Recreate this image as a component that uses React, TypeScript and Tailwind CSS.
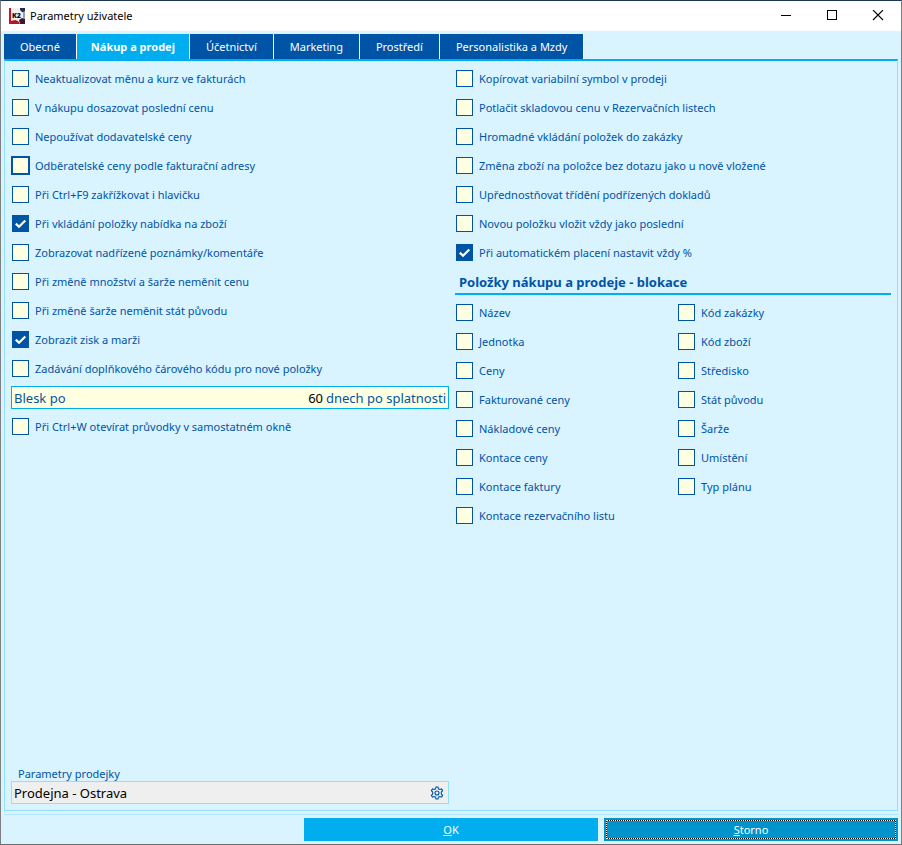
import React from "react";
import { clsx } from "clsx";

interface CheckProps {
  id: string;
  label: string;
  checked?: boolean;
  focused?: boolean;
}

const tabs = ["Obecné", "Nákup a prodej", "Účetnictví", "Marketing", "Prostředí", "Personalistika a Mzdy"];

const purchase: CheckProps[] = [
  { id: "currency", label: "Neaktualizovat měnu a kurz ve fakturách" },
  { id: "last-price", label: "V nákupu dosazovat poslední cenu" },
  { id: "supplier-prices", label: "Nepoužívat dodavatelské ceny" },
  { id: "customer-prices", label: "Odběratelské ceny podle fakturační adresy", focused: true },
  { id: "ctrl-f9", label: "Při Ctrl+F9 zakřížkovat i hlavičku" },
  { id: "offer", label: "Při vkládání položky nabídka na zboží", checked: true },
  { id: "comments", label: "Zobrazovat nadřízené poznámky/komentáře" },
  { id: "batch-price", label: "Při změně množství a šarže neměnit cenu" },
  { id: "batch-origin", label: "Při změně šarže neměnit stát původu" },
  { id: "profit", label: "Zobrazit zisk a marži", checked: true },
  { id: "barcode", label: "Zadávání doplňkového čárového kódu pro nové položky" },
];

const sales: CheckProps[] = [
  { id: "symbol", label: "Kopírovat variabilní symbol v prodeji" },
  { id: "stock-price", label: "Potlačit skladovou cenu v Rezervačních listech" },
  { id: "bulk", label: "Hromadné vkládání položek do zakázky" },
  { id: "goods-change", label: "Změna zboží na položce bez dotazu jako u nově vložené" },
  { id: "sorting", label: "Upřednostňovat třídění podřízených dokladů" },
  { id: "new-last", label: "Novou položku vložit vždy jako poslední" },
  { id: "auto-pay", label: "Při automatickém placení nastavit vždy %", checked: true },
];

const blockLeft: CheckProps[] = [
  { id: "b-name", label: "Název" },
  { id: "b-unit", label: "Jednotka" },
  { id: "b-prices", label: "Ceny" },
  { id: "b-invoiced", label: "Fakturované ceny" },
  { id: "b-cost", label: "Nákladové ceny" },
  { id: "b-acc-price", label: "Kontace ceny" },
  { id: "b-acc-invoice", label: "Kontace faktury" },
  { id: "b-acc-reservation", label: "Kontace rezervačního listu" },
];

const blockRight: CheckProps[] = [
  { id: "b-order", label: "Kód zakázky" },
  { id: "b-goods", label: "Kód zboží" },
  { id: "b-center", label: "Středisko" },
  { id: "b-origin", label: "Stát původu" },
  { id: "b-batch", label: "Šarže" },
  { id: "b-location", label: "Umístění" },
  { id: "b-plan", label: "Typ plánu" },
];

function Check({ id, label, checked, focused }: CheckProps) {
  return (
    <div className="flex h-[29px] items-center">
      <span className="grid w-[19px] place-items-center">
        <input
          id={id}
          type="checkbox"
          defaultChecked={checked}
          className={clsx(
            "peer col-start-1 row-start-1 appearance-none border-[#0054a6] bg-[#ffffe1] checked:bg-[#0054a6]",
            focused ? "size-[19px] border-2" : "size-[17px] border"
          )}
        />
        <svg
          viewBox="0 0 17 17"
          className="pointer-events-none invisible col-start-1 row-start-1 size-[17px] peer-checked:visible"
        >
          <path d="M3.8 8.600 7 11.800 13.300 5.400" fill="none" stroke="#ffffe1" strokeWidth="2.200" />
        </svg>
      </span>
      <label htmlFor={id} className="pl-[5px] whitespace-nowrap">
        {label}
      </label>
    </div>
  );
}

function Logo() {
  return (
    <svg viewBox="0 0 16 16" className="size-4" aria-hidden="true">
      <rect width="16" height="16" fill="#f1eff2" />
      <path d="M11 0h5v5l-3-1-2-2z" fill="#2a2b45" />
      <path d="M14 4l2-1v8l-2-1z" fill="#9aa0b4" />
      <path d="M2 16v-3l4-1 3 1 2 3z" fill="#b3142c" />
      <path d="M10 12l3-2 3 1v5h-5z" fill="#3a1a2c" />
      <rect width="2" height="16" fill="#c4122f" />
      <text x="3" y="10" fontSize="7" fontWeight="900" fill="#0b0b12">
        K2
      </text>
    </svg>
  );
}

function Gear() {
  return (
    <svg viewBox="0 0 14 14" className="size-3.5" fill="none" stroke="#0054a6" strokeWidth="1.100" aria-hidden="true">
      <path d="M6 1h2l.5 1.800 1.300.7 1.800-.5 1 1.700L11.300 6v2l1.300 1.300-1 1.700-1.800-.5-1.300.7L8 13H6l-.5-1.800-1.300-.7-1.800.5-1-1.700L2.700 8V6L1.400 4.700l1-1.700 1.800.5 1.300-.7z" />
      <circle cx="7" cy="7" r="2" />
    </svg>
  );
}

export default function App() {
  return (
    <div className="flex min-h-screen flex-col border border-x-[#7d7f82] border-t-[#1b3653] border-b-[#6b6d70] bg-[#d9f3ff] font-['Noto_Sans',sans-serif] text-[11px] leading-4 text-[#0054a6]">
      <header className="flex h-[30px] items-center bg-white text-black">
        <div className="flex flex-1 items-center gap-[5px] pl-2">
          <Logo />
          <h1>Parametry uživatele</h1>
        </div>
        <button aria-label="Minimalizovat" className="grid h-full w-[46px] place-items-center">
          <svg viewBox="0 0 12 12" className="size-3" stroke="#000" shapeRendering="crispEdges">
            <path d="M1 5.500h10" />
          </svg>
        </button>
        <button aria-label="Maximalizovat" className="grid h-full w-[46px] place-items-center">
          <svg viewBox="0 0 12 12" className="size-3" fill="none" stroke="#000" shapeRendering="crispEdges">
            <rect x="1.500" y="0.500" width="9" height="9" />
          </svg>
        </button>
        <button aria-label="Zavřít" className="grid h-full w-[46px] place-items-center">
          <svg viewBox="0 0 12 12" className="size-3" stroke="#000" strokeWidth="1.100">
            <path d="M1 0l10 10M11 0 1 10" />
          </svg>
        </button>
      </header>

      <main className="flex flex-1 flex-col px-[3px] pt-[3px]">
        <nav className="flex h-[25px]">
          {tabs.map((tab, i) => (
            <button
              key={tab}
              className={clsx(
                "border-r border-white text-white",
                i === 1 ? "bg-[#00aeef] px-3.5 font-bold" : "bg-[#0054a6] px-4"
              )}
            >
              {tab}
            </button>
          ))}
        </nav>

        <section className="flex flex-1 flex-col border border-t-2 border-[#92deff] border-t-[#00aeef] px-1.5 pt-[3px] pb-1.5">
          <div className="grid flex-1 grid-cols-[438fr_436fr] gap-1.5">
            <div>
              {purchase.map((item) => (
                <Check key={item.id} {...item} />
              ))}
              <div className="flex h-[29px] items-center">
                <div className="flex h-[23px] w-full items-center border border-[#00aeef] bg-[#ffffe1] px-0.5 text-[13px]">
                  <label htmlFor="days">Blesk po</label>
                  <input id="days" defaultValue="60" className="min-w-0 flex-1 text-right text-black" />
                  <span className="pl-[3px]">dnech po splatnosti</span>
                </div>
              </div>
              <Check id="ctrl-w" label="Při Ctrl+W otevírat průvodky v samostatném okně" />
            </div>

            <div>
              {sales.map((item) => (
                <Check key={item.id} {...item} />
              ))}
              <h2 className="mb-[3px] flex h-7 items-end border-b-2 border-[#00aeef] px-1 pb-[3px] text-[13px] font-bold">
                Položky nákupu a prodeje - blokace
              </h2>
              <div className="grid grid-cols-2 gap-2">
                <div>
                  {blockLeft.map((item) => (
                    <Check key={item.id} {...item} />
                  ))}
                </div>
                <div>
                  {blockRight.map((item) => (
                    <Check key={item.id} {...item} />
                  ))}
                </div>
              </div>
            </div>
          </div>

          <div className="grid grid-cols-[438fr_436fr] gap-1.5">
            <div>
              <label htmlFor="receipt" className="block pl-[7px] leading-[14px]">
                Parametry prodejky
              </label>
              <div className="flex h-[23px] items-center border border-[#92deff] bg-[#efefef] pr-1 pl-0.5">
                <input
                  id="receipt"
                  readOnly
                  defaultValue="Prodejna - Ostrava"
                  className="min-w-0 flex-1 text-[13px] text-black"
                />
                <button aria-label="Nastavení">
                  <Gear />
                </button>
              </div>
            </div>
          </div>
        </section>

        <footer className="mt-[3px] grid grid-cols-3 gap-1.5 border-t border-[#b5e8ff] pt-[3px] pb-[3px] text-[11px] text-white">
          <button className="col-start-2 h-[23px] bg-[#00aeef]">
            <span className="underline">O</span>K
          </button>
          <button className="h-[23px] bg-[#0093cc] p-0.5">
            <span className="block h-full bg-black">
              <span className="flex h-full items-center justify-center border border-dotted border-white bg-[#0093cc] bg-clip-padding">
                <span className="underline">S</span>torno
              </span>
            </span>
          </button>
        </footer>
      </main>
    </div>
  );
}
